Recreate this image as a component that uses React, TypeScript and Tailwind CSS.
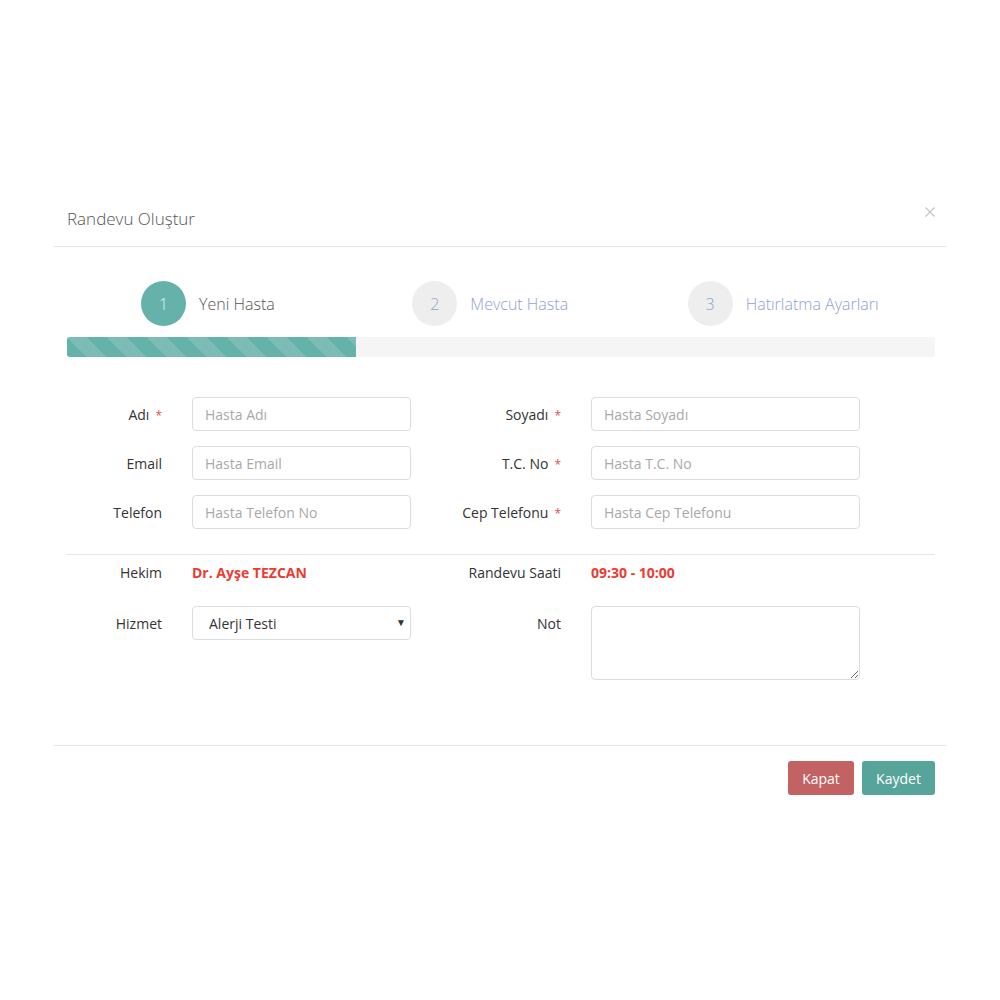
import React from 'react';

const steps = [
  { n: 1, label: 'Yeni Hasta', active: true },
  { n: 2, label: 'Mevcut Hasta', active: false },
  { n: 3, label: 'Hatırlatma Ayarları', active: false },
];

const Star = () => <span className="ml-[6px] text-[12px] text-[#d9534f]">*</span>;

const Field = ({ placeholder, w }: { placeholder: string; w: string }) => (
  <input
    placeholder={placeholder}
    className={`${w} h-[34px] rounded-[4px] border border-[#dddddd] bg-white px-[12px] text-[14px] text-[#555] outline-none placeholder:text-[#a9a9a9]`}
  />
);

const rows = [
  { l: 'Adı', lr: true, lp: 'Hasta Adı', r: 'Soyadı', rr: true, rp: 'Hasta Soyadı' },
  { l: 'Email', lr: false, lp: 'Hasta Email', r: 'T.C. No', rr: true, rp: 'Hasta T.C. No' },
  { l: 'Telefon', lr: false, lp: 'Hasta Telefon No', r: 'Cep Telefonu', rr: true, rp: 'Hasta Cep Telefonu' },
];

export default function App() {
  return (
    <div className="min-h-[1000px] bg-white pt-[192px] font-['Open_Sans',sans-serif] text-[14px] text-[#333]">
      <div className="mx-auto w-[892px] bg-white">
        {/* header */}
        <div className="relative flex items-center border-b border-[#e5e5e5] px-[13px] py-[15px]">
          <h4 className="text-[17px] font-light leading-[24px] text-[#555]">Randevu Oluştur</h4>
          <button className="absolute right-[11px] top-[15px] text-[#c4c4c4]">
            <svg width="10" height="10" viewBox="0 0 10 10" fill="none" stroke="currentColor" strokeWidth="1.2">
              <path d="M0.5 0.5 L9.5 9.5 M9.5 0.5 L0.5 9.5" />
            </svg>
          </button>
        </div>

        {/* body */}
        <div className="pl-[13px] pr-[11px] pt-[34px] pb-[65px]">
          {/* steps */}
          <div className="grid grid-cols-3">
            {steps.map((s, i) => (
              <div key={s.n} className={`flex items-center ${i === 0 ? 'pl-[74px]' : i === 1 ? 'pl-[56px]' : 'pl-[42px]'}`}>
                <div
                  className={`flex h-[45px] w-[45px] items-center justify-center rounded-full text-[16px] font-light ${
                    s.active ? 'bg-[#64b2a9] text-[#e4f2ef]' : 'bg-[#eeeeee] text-[#8fa2d2]'
                  }`}
                >
                  {s.n}
                </div>
                <span className={`ml-[13px] text-[16px] font-light ${s.active ? 'text-[#555]' : 'text-[#8fa2d2]'}`}>
                  {s.label}
                </span>
              </div>
            ))}
          </div>

          <div className="mt-[11px] h-[20px] overflow-hidden rounded-[3px] bg-[#f5f5f5]">
            <div className="h-full w-[289px] bg-[#64b2a9] bg-[linear-gradient(45deg,rgba(255,255,255,.15)_25%,transparent_25%,transparent_50%,rgba(255,255,255,.15)_50%,rgba(255,255,255,.15)_75%,transparent_75%,transparent)] bg-size-[40px_40px]" />
          </div>

          {/* form */}
          <div className="mt-[40px] flex flex-col gap-[15px]">
            {rows.map((r) => (
              <div key={r.l} className="flex items-center">
                <label className="w-[95px] text-right">
                  {r.l}
                  {r.lr && <Star />}
                </label>
                <div className="ml-[30px]">
                  <Field placeholder={r.lp} w="w-[219px]" />
                </div>
                <label className="w-[150px] text-right">
                  {r.r}
                  {r.rr && <Star />}
                </label>
                <div className="ml-[30px]">
                  <Field placeholder={r.rp} w="w-[269px]" />
                </div>
              </div>
            ))}
          </div>

          <div className="mt-[25px] border-t border-[#e5e5e5]" />

          <div className="mt-[7px] flex h-[20px] items-center">
            <span className="w-[95px] text-right">Hekim</span>
            <span className="ml-[30px] w-[219px] font-bold text-[#eb3b32]">Dr. Ayşe TEZCAN</span>
            <span className="w-[150px] text-right">Randevu Saati</span>
            <span className="ml-[30px] font-bold text-[#eb3b32]">09:30 - 10:00</span>
          </div>

          <div className="mt-[24px] flex items-start">
            <span className="mt-[7px] w-[95px] text-right">Hizmet</span>
            <div className="relative ml-[30px] w-[219px]">
              <select className="h-[34px] w-full appearance-none rounded-[4px] border border-[#dddddd] bg-white pl-[16px] text-[14px] text-[#333] outline-none">
                <option>Alerji Testi</option>
              </select>
              <span className="pointer-events-none absolute right-[5px] top-[9px] text-[10px] text-[#333]">▼</span>
            </div>
            <span className="mt-[7px] w-[150px] text-right">Not</span>
            <textarea className="ml-[30px] h-[74px] w-[269px] rounded-[4px] border border-[#dddddd] bg-white outline-none" />
          </div>
        </div>

        {/* footer */}
        <div className="flex justify-end gap-[8px] border-t border-[#e5e5e5] px-[11px] pb-[15px] pt-[15px]">
          <button className="h-[34px] w-[66px] rounded-[3px] bg-[#c26262] text-[14px] text-white">Kapat</button>
          <button className="h-[34px] w-[73px] rounded-[3px] bg-[#57a59a] text-[14px] text-white">Kaydet</button>
        </div>
      </div>
    </div>
  );
}
